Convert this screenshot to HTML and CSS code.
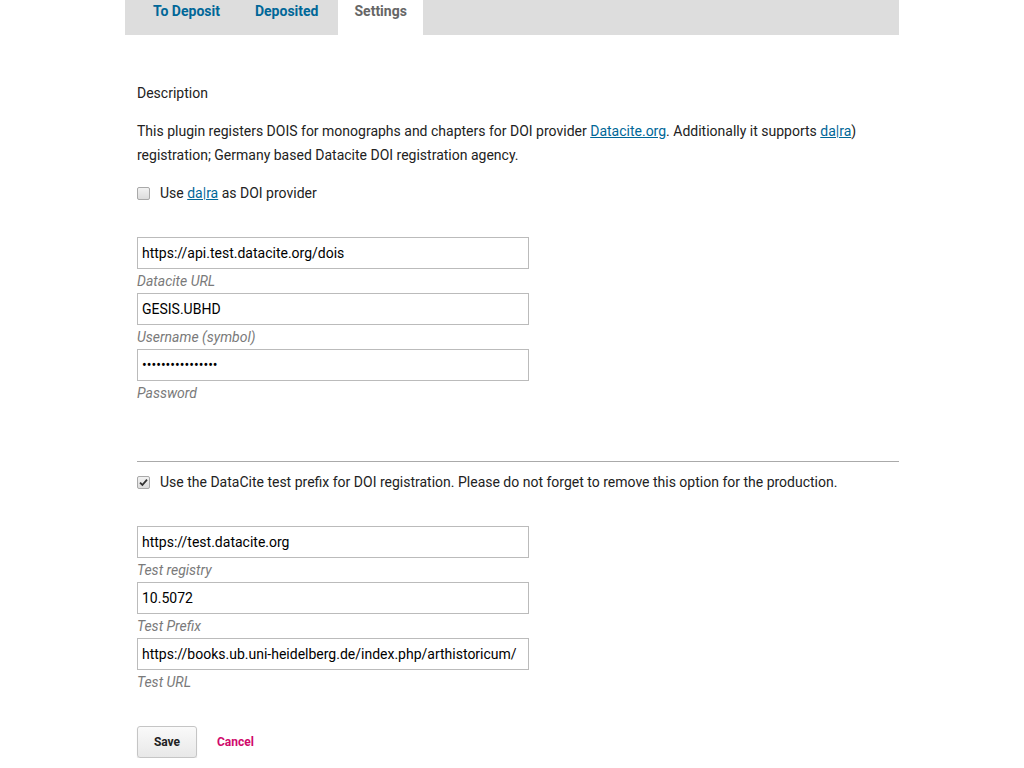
FILE: index.html
```html
<!DOCTYPE html>
<html>
<head>
<meta charset="utf-8">
<link rel="stylesheet" href="styles.css">
</head>
<body>
<div class="page">
  <nav class="tabs">
    <a class="tab">To Deposit</a>
    <a class="tab">Deposited</a>
    <a class="tab active">Settings</a>
  </nav>
  <form class="content">
    <h3 class="section-title">Description</h3>
    <p class="desc">This plugin registers DOIS for monographs and chapters for DOI provider <a href="#">Datacite.org</a>. Additionally it supports <a href="#">da|ra</a>) registration; Germany based Datacite DOI registration agency.</p>
    <label class="check"><input type="checkbox"> <span>Use <a href="#">da|ra</a> as DOI provider</span></label>

    <div class="fields first">
      <div class="field"><input class="text" type="text" value="https://api.test.datacite.org/dois"><span class="lbl">Datacite URL</span></div>
      <div class="field"><input class="text" type="text" value="GESIS.UBHD"><span class="lbl">Username (symbol)</span></div>
      <div class="field"><input class="text" type="password" value="abcdefghijklmnop"><span class="lbl">Password</span></div>
    </div>

    <hr class="sep">
    <label class="check"><input type="checkbox" checked> <span>Use the DataCite test prefix for DOI registration. Please do not forget to remove this option for the production.</span></label>

    <div class="fields second">
      <div class="field"><input class="text" type="text" value="https://test.datacite.org"><span class="lbl">Test registry</span></div>
      <div class="field"><input class="text" type="text" value="10.5072"><span class="lbl">Test Prefix</span></div>
      <div class="field"><input class="text" type="text" value="https://books.ub.uni-heidelberg.de/index.php/arthistoricum/"><span class="lbl">Test URL</span></div>
    </div>

    <div class="buttons">
      <button type="button" class="save">Save</button>
      <a class="cancel" href="#">Cancel</a>
    </div>
  </form>
</div>
</body>
</html>
```

FILE: styles.css
```css
html, body {
  margin: 0;
  padding: 0;
  background: #fff;
}
body {
  font-family: Roboto, "Noto Sans", sans-serif;
  font-size: 14px;
  line-height: 24px;
  color: #222;
}
.page {
  width: 774px;
  margin-left: 125px;
}
.tabs {
  display: flex;
  height: 35px;
  background: #ddd;
  padding-left: 12px;
}
.tab {
  display: block;
  font-weight: bold;
  font-size: 14px;
  line-height: 22px;
  color: #006798;
  text-decoration: none;
}
.tab:first-child { padding: 0 17px 0 16px; }
.tab:nth-child(2) { padding: 0 20px 0 18px; }
.tab.active {
  background: #fff;
  color: #666;
  padding: 0 16px 0 16px;
}
.content {
  padding: 46px 0 0 12px;
}
.section-title {
  margin: 0;
  font-size: 14px;
  font-weight: normal;
  line-height: 24px;
}
.desc {
  margin: 14px 0 0;
}
a {
  color: #006798;
  text-decoration: underline;
}
.check {
  display: flex;
  align-items: center;
  margin-top: 14px;
  height: 24px;
}
.check input {
  -webkit-appearance: none;
  appearance: none;
  box-sizing: border-box;
  margin: 0 10px 0 0;
  width: 13px;
  height: 13px;
  border: 1px solid #a9a9a9;
  border-radius: 2px;
  background-color: #e6e6e6;
  background-image: linear-gradient(#f2f2f2, #dcdcdc);
}
.check input:checked {
  background-image: url("data:image/svg+xml,%3Csvg xmlns='http://www.w3.org/2000/svg' viewBox='0 0 11 11'%3E%3Cpath d='M2 5.6 L4.4 8 L9 2.6' fill='none' stroke='%23333' stroke-width='1.8'/%3E%3C/svg%3E"), linear-gradient(#f2f2f2, #dcdcdc);
  background-size: 11px 11px, 100% 100%;
  background-repeat: no-repeat;
}
.fields.first { margin-top: 32px; }
.fields.second { margin-top: 32px; }
.field {
  display: flex;
  flex-direction: column;
  width: 392px;
}
.text {
  box-sizing: border-box;
  width: 392px;
  height: 32px;
  border: 1px solid #bbb;
  padding: 0 4px;
  font-family: Roboto, "Noto Sans", sans-serif;
  font-size: 14px;
  color: #000;
  background: #fff;
  outline: none;
  margin: 0;
}
.lbl {
  font-style: italic;
  color: #7a7a7a;
  line-height: 24px;
  height: 24px;
}
.sep {
  margin: 56px 0 0 0;
  width: 762px;
  border: 0;
  border-top: 1px solid #aaa;
  height: 0;
}
.sep + .check { margin-top: 8px; }
.buttons {
  display: flex;
  align-items: center;
  margin-top: 32px;
  gap: 20px;
}
.save {
  box-sizing: border-box;
  width: 60px;
  height: 32px;
  border: 1px solid #c5c5c5;
  border-radius: 3px;
  background: linear-gradient(#fafafa, #e8e8e8);
  box-shadow: 0 1px 1px rgba(0,0,0,0.15);
  font-family: Roboto, "Noto Sans", sans-serif;
  font-weight: bold;
  font-size: 12px;
  color: #222;
  padding: 0;
}
.cancel {
  font-weight: bold;
  font-size: 12px;
  color: #d00a6c;
  text-decoration: none;
}
```
